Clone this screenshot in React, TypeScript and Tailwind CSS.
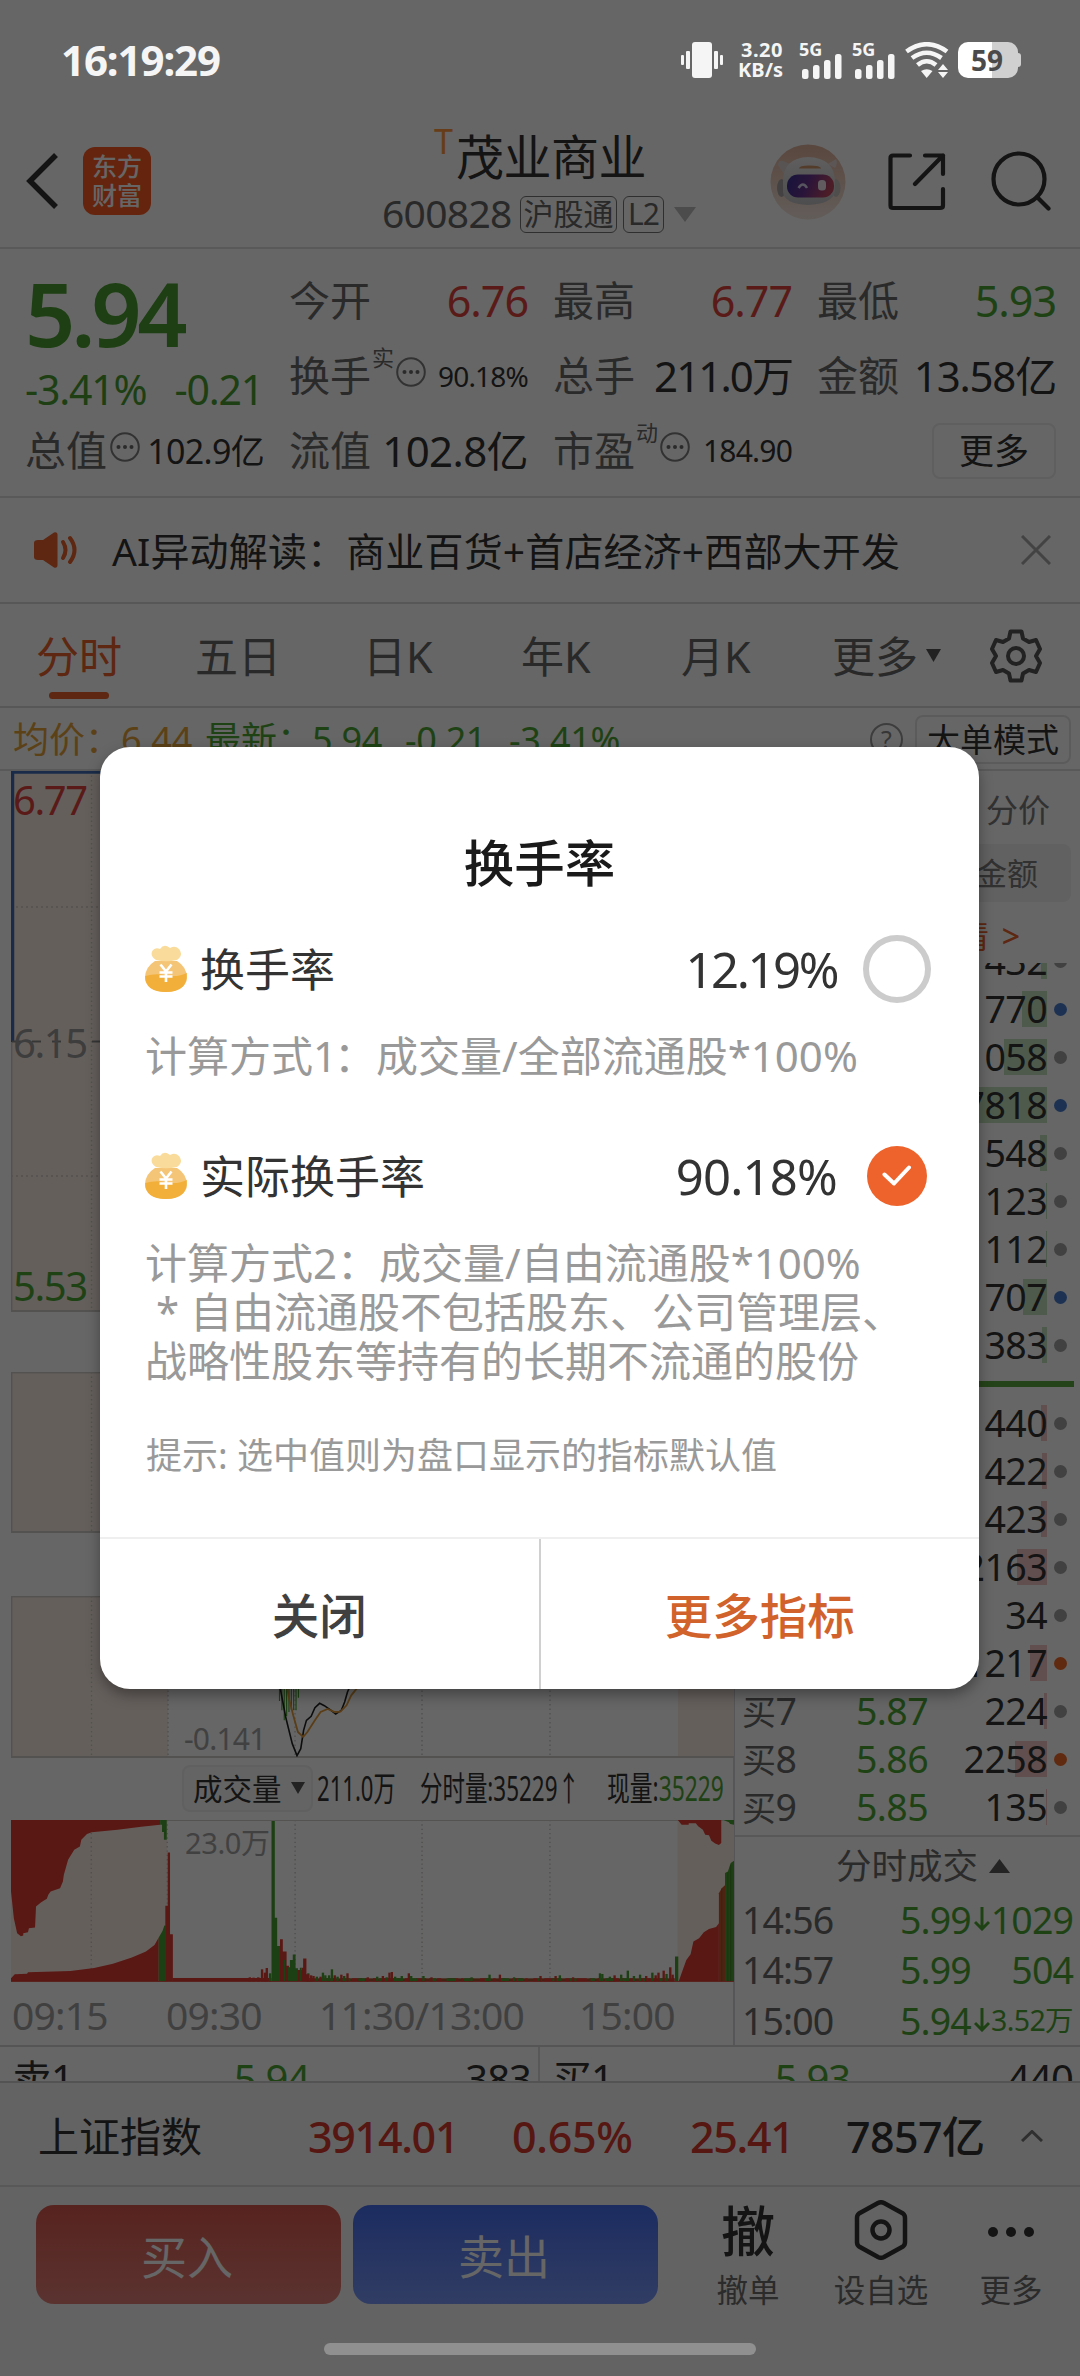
import React from "react";

const FONT = "font-['Noto_Sans','Noto_Sans_CJK_SC',sans-serif]";

/* ---------- icons ---------- */

function SignalBars() {
  return (
    <svg width="40" height="26" viewBox="0 0 40 26" fill="#f5f5f5">
      <rect x="0" y="16" width="6.5" height="10" rx="2.5" />
      <rect x="11" y="12" width="6.5" height="14" rx="2.5" />
      <rect x="22" y="7" width="6.5" height="19" rx="2.5" />
      <rect x="33" y="1" width="6.5" height="25" rx="2.5" />
    </svg>
  );
}

function VibrateIcon() {
  return (
    <svg width="42" height="36" viewBox="0 0 42 36" fill="#f5f5f5">
      <rect x="11" y="0" width="20" height="36" rx="3" />
      <rect x="5" y="9" width="4" height="18" rx="1" />
      <rect x="33" y="9" width="4" height="18" rx="1" />
      <rect x="0" y="13" width="3" height="10" rx="1" />
      <rect x="39" y="13" width="3" height="10" rx="1" />
    </svg>
  );
}

function WifiIcon() {
  return (
    <svg width="44" height="36" viewBox="0 0 44 36" fill="none" stroke="#f5f5f5" strokeWidth="4.6">
      <path d="M1.5 9.5 Q21.7 -5 42 9.5" />
      <path d="M7 16 Q21.7 5.5 36.5 16" />
      <path d="M12.5 23 Q21.7 15.5 31 23" />
      <path d="M16 29 Q21.7 25.5 27.5 29 L21.7 36Z" fill="#f5f5f5" stroke="none" />
      <path d="M33 28 L38 22 L43 28Z M33 30 L38 36 L43 30Z" fill="#f5f5f5" stroke="none" />
    </svg>
  );
}

function Robot() {
  return (
    <svg width="76" height="76" viewBox="0 0 76 76">
      <defs>
        <linearGradient id="halo" x1="0" y1="0" x2="0" y2="1">
          <stop offset="0" stopColor="#dfb29c" />
          <stop offset="1" stopColor="#f7e8e0" />
        </linearGradient>
        <linearGradient id="visor" x1="0" y1="0" x2="1" y2="0.2">
          <stop offset="0" stopColor="#3a3196" />
          <stop offset="0.5" stopColor="#6a348f" />
          <stop offset="1" stopColor="#c04a62" />
        </linearGradient>
        <linearGradient id="shell" x1="0" y1="0" x2="0" y2="1">
          <stop offset="0" stopColor="#f0ecec" />
          <stop offset="1" stopColor="#c0c0c4" />
        </linearGradient>
      </defs>
      <circle cx="38" cy="38" r="37.5" fill="url(#halo)" />
      <path d="M8 21 Q8 16 13 17 L20 20 L14 30Z" fill="#dcd2d0" />
      <path d="M66 15 Q68 19 65 24 L58 20Z" fill="#e6dad6" />
      <ellipse cx="11.5" cy="44" rx="4.5" ry="9" fill="#a8a4a4" />
      <ellipse cx="66" cy="44" rx="4.5" ry="9" fill="#c8c0c0" />
      <path d="M13 38 Q13 14 38 13 Q65 14 65 38 L65 48 Q62 60 38 61 Q14 60 13 48Z" fill="url(#shell)" />
      <path d="M29 24.5 Q29 21.5 39 21.5 Q51 21.5 51 24.5Z" fill="#d0966a" />
      <rect x="17" y="30.5" width="47" height="23" rx="11" fill="url(#visor)" />
      <path d="M28.5 44 Q33 37 37 44" stroke="#d8d4f0" strokeWidth="2.5" fill="none" />
      <rect x="48" y="36" width="8" height="10.5" rx="3.5" fill="#efe6f0" />
    </svg>
  );
}

function MoneyBag() {
  return (
    <svg width="44" height="48" viewBox="0 0 44 48">
      <path d="M11 16 L33 16 Q43 22 43 33 A21 14 0 0 1 1 33 Q1 22 11 16Z" fill="#f5c577" />
      <path d="M1.2 31 Q12 28 22 30.5 Q34 32.5 42.8 28 Q44 47 22 47 Q1 47 1.2 31Z" fill="#f2b03a" />
      <path d="M12 15 Q5 10 9 5 Q12 2 16 4 Q20 -2 26 3 Q31 0 35 4 Q40 10 33 15 Q22 17.5 12 15Z" fill="#f9dc9c" />
      <path d="M16.5 19.5 L22 26.5 L27.5 19.5 M15.5 27.5 H28.5 M15.5 31.5 H28.5 M22 26.5 V37" stroke="#fff" strokeWidth="2.6" fill="none" />
    </svg>
  );
}

function Ellip() {
  return (
    <svg width="30" height="30" viewBox="0 0 30 30" fill="none" stroke="#7d7d7d" strokeWidth="2" className="shrink-0">
      <circle cx="15" cy="15" r="13.8" />
      <g fill="#6a6a6a" stroke="none">
        <circle cx="8.5" cy="15" r="2" />
        <circle cx="15" cy="15" r="2" />
        <circle cx="21.5" cy="15" r="2" />
      </g>
    </svg>
  );
}

/* ---------- status bar and header ---------- */

function StatusBar() {
  return (
    <div className="relative z-20 flex h-[120px] items-center justify-between pr-[59px] pl-[61px] text-[#f5f5f5]">
      <span className="text-[42px] leading-none font-bold tracking-[-1.1px]">16:19:29</span>
      <div className="flex h-[36px] items-center">
        <VibrateIcon />
        <div className="ml-[14px] flex w-[46px] flex-col items-end text-[20px] leading-[20px] font-bold">
          <span className="tracking-[0.5px]">3.20</span>
          <span>KB/s</span>
        </div>
        {[0, 1].map((i) => (
          <div key={i} className={i === 0 ? "ml-[16px] flex h-[36px] w-[44px] flex-col" : "ml-[9px] flex h-[36px] w-[44px] flex-col"}>
            <span className="h-[11px] text-[18px] leading-[15px] font-bold">5G</span>
            <span className="pl-[3px]"><SignalBars /></span>
          </div>
        ))}
        <span className="ml-[9px]"><WifiIcon /></span>
        <div className="ml-[9px] flex h-[36px] w-[60px] items-center justify-center rounded-[10px] bg-[linear-gradient(90deg,#fff_57%,#d0d0d0_57%)] pr-[2px] text-[28px] leading-none font-bold text-[#4a4a4a]">
          59
        </div>
        <div className="h-[14px] w-[3px] rounded-r-full bg-[#d0d0d0]" />
      </div>
    </div>
  );
}

function Header() {
  return (
    <header className="flex h-[129px] items-start border-b-2 border-[#e0dfe0] pl-[26px] text-[#333]">
      <svg width="34" height="56" viewBox="0 0 34 56" className="mt-[33px]" fill="none" stroke="#333" strokeWidth="5.5">
        <path d="M30 2 L4 28 L30 54" />
      </svg>
      <div className="mt-[27px] ml-[23px] flex h-[68px] w-[68px] flex-col items-center justify-center rounded-[12px] bg-[#fd5a23] text-[25px] leading-[29px] font-medium text-white">
        <span>东方</span>
        <span>财富</span>
      </div>
      <div className="ml-[231px] flex w-[315px] flex-col">
        <div className="flex h-[66px] items-center pl-[52px]">
          <span className="mb-[24px] text-[34px] leading-none text-[#ff9a3c]">T</span>
          <span className="mt-[8px] ml-[3px] text-[48px] leading-none tracking-[-0.5px]">茂业商业</span>
        </div>
        <div className="mt-[9px] flex h-[38px] items-center text-[#666]">
          <span className="w-[138px] pb-[4px] text-[39px] leading-none tracking-[-0.7px]">600828</span>
          <span className="flex h-[37px] w-[97px] items-center justify-center rounded-[6px] border-[1.5px] border-[#777] text-[30px] leading-none">沪股通</span>
          <span className="ml-[6px] flex h-[37px] w-[41px] items-center justify-center rounded-[6px] border-[1.5px] border-[#777] text-[30px] leading-none tracking-[-1px]">L2</span>
          <svg width="22" height="15" viewBox="0 0 22 15" className="ml-[10px]" fill="#bdbdbd"><path d="M0 0 H22 L11 15Z" /></svg>
        </div>
      </div>
      <div className="mt-[24px] ml-[73px] w-[76px] shrink-0"><Robot /></div>
      <svg width="58" height="58" viewBox="0 0 58 58" className="mt-[33px] ml-[42px] shrink-0" fill="none" stroke="#333" strokeWidth="4.2" strokeLinecap="round" strokeLinejoin="round">
        <path d="M22 2.5 H5 Q2.5 2.5 2.5 5 V52.5 Q2.5 55 5 55 H52 Q55 55 55 52.5 V36" />
        <path d="M37 2.5 H55 V21 M55 2.5 L27 31" />
      </svg>
      <svg width="60" height="60" viewBox="0 0 60 60" className="mt-[31px] ml-[45px] shrink-0" fill="none" stroke="#333" strokeWidth="4.2" strokeLinecap="round">
        <circle cx="28" cy="28" r="25.5" />
        <path d="M46 46 L57.5 57.5" />
      </svg>
    </header>
  );
}

/* ---------- quote ---------- */

function Cell({ label, sup, info, value, valueClass }: { label: string; sup?: string; info?: boolean; value: string; valueClass: string }) {
  return (
    <div className="flex h-[75px] items-center">
      <span className="text-[41px] leading-none text-[#696969]">{label}</span>
      {sup && <span className="mb-[38px] ml-[1px] text-[22px] leading-none text-[#696969]">{sup}</span>}
      {info && <span className={sup ? "mt-[-8px] ml-[2px]" : "mt-[-8px] ml-[3px]"}><Ellip /></span>}
      <span className={"ml-auto leading-none whitespace-nowrap " + valueClass}>{value}</span>
    </div>
  );
}

function Quote() {
  const big = "text-[43px] tracking-[-1px] ";
  return (
    <section className="h-[249px] border-b-2 border-[#e0dfe0] pt-[14px] pl-[25px]">
      <div className="grid grid-cols-[239px_239px_239px_239px] gap-x-[25px]">
        <div className="row-span-2 flex flex-col text-[#4a9f30]">
          <span className="h-[102px] text-[88px] leading-[100px] font-semibold tracking-[-4.2px]">5.94</span>
          <div className="flex h-[48px] items-center justify-between pr-[1px] text-[41px] leading-none tracking-[-1.2px]">
            <span>-3.41%</span>
            <span>-0.21</span>
          </div>
        </div>
        <Cell label="今开" value="6.76" valueClass={big + "text-[#e0453c]"} />
        <Cell label="最高" value="6.77" valueClass={big + "text-[#e0453c]"} />
        <Cell label="最低" value="5.93" valueClass={big + "text-[#4fa535]"} />
        <Cell label="换手" sup="实" info value="90.18%" valueClass="text-[28px] tracking-[-0.8px]" />
        <Cell label="总手" value="211.0万" valueClass="text-[42px] tracking-[-1.9px]" />
        <Cell label="金额" value="13.58亿" valueClass="text-[42px] tracking-[-1.2px]" />
        <Cell label="总值" info value="102.9亿" valueClass="text-[34px] tracking-[-0.7px]" />
        <Cell label="流值" value="102.8亿" valueClass="text-[42px] tracking-[-0.6px]" />
        <Cell label="市盈" sup="动" info value="184.90" valueClass="text-[30px] tracking-[-0.8px]" />
        <div className="flex h-[75px] items-center justify-end">
          <button className="h-[56px] w-[124px] rounded-[8px] border-2 border-[#ededed] text-[35px] leading-none">更多</button>
        </div>
      </div>
    </section>
  );
}

function News() {
  return (
    <section className="flex h-[106px] items-center border-b-2 border-[#d9d9d9] pr-[29px] pl-[34px]">
      <svg width="44" height="36" viewBox="0 0 44 36" fill="#e8622c">
        <path d="M0 11 Q0 8 4 8 H9 L20 0.5 Q23.5 -0.5 23.5 3 V33 Q23.5 36.5 20 35.5 L9 28 H4 Q0 28 0 25Z" />
        <path d="M29 10 Q34 18 29 26" fill="none" stroke="#e8622c" strokeWidth="4" strokeLinecap="round" />
        <path d="M36 6 Q45 18 36 30" fill="none" stroke="#e8622c" strokeWidth="4" strokeLinecap="round" />
      </svg>
      <span className="ml-[34px] text-[39px] leading-none tracking-[0.15px]">AI异动解读：商业百货+首店经济+西部大开发</span>
      <svg width="30" height="30" viewBox="0 0 30 30" className="ml-auto" stroke="#a8a8a8" strokeWidth="3"><path d="M1 1 L29 29 M29 1 L1 29" /></svg>
    </section>
  );
}

function Tabs() {
  const tabs: [string, string][] = [
    ["五日", "ml-[72px] w-[86px]"],
    ["日K", "ml-[82px] w-[74px]"],
    ["年K", "ml-[84px] w-[74px]"],
    ["月K", "ml-[86px] w-[74px]"],
    ["更多", "ml-[77px] w-[88px]"],
  ];
  return (
    <nav className="flex h-[104px] items-start border-b-2 border-[#d9d9d9] pl-[35px] text-[43px] text-[#666]">
      <div className="flex w-[88px] flex-col items-center">
        <span className="mt-[31px] h-[44px] leading-[44px] text-[#e8622c]">分时</span>
        <span className="mt-[13px] h-[7px] w-[60px] rounded-full bg-[#e8622c]" />
      </div>
      {tabs.map(([t, c]) => (
        <span key={t} className={"mt-[31px] leading-[44px] whitespace-nowrap " + c}>{t}</span>
      ))}
      <svg width="15" height="13" viewBox="0 0 15 13" className="mt-[45px] ml-[6px]" fill="#555"><path d="M0 0 H15 L7.5 13Z" /></svg>
      <svg width="52" height="54" viewBox="0 0 52 54" className="mt-[25px] ml-[49px]" fill="none" stroke="#555" strokeWidth="4" strokeLinejoin="round">
        <path d="M20.5 2.5 H31.5 L33 9.5 L39 13 L46 11 L50 20 L46 27 L50 34 L46 43 L39 41 L33 44.5 L31.5 51.5 H20.5 L19 44.5 L13 41 L6 43 L2 34 L6 27 L2 20 L6 11 L13 13 L19 9.5Z" />
        <circle cx="26" cy="27" r="8" />
      </svg>
    </nav>
  );
}

function PriceInfo() {
  return (
    <div className="flex h-[63px] items-center border-b-2 border-[#dedede] pt-[2px] pr-[9px] pl-[13px] text-[36px] leading-none whitespace-nowrap text-[#4fa535]">
      <span className="w-[108px] text-[#e5a23a]">均价：</span>
      <span className="w-[84px] text-[#e5a23a]">6.44</span>
      <span className="w-[107px]">最新：</span>
      <span className="w-[93px] tracking-[-0.4px]">5.94</span>
      <span className="w-[104px] tracking-[-0.4px]">-0.21</span>
      <span className="tracking-[-0.3px]">-3.41%</span>
      <div className="ml-auto flex h-[33px] w-[33px] items-center justify-center rounded-full border-2 border-[#999] text-[25px] text-[#888]">?</div>
      <div className="ml-[12px] flex h-[49px] w-[156px] items-center justify-center rounded-[8px] border-2 border-[#e4e4e4] text-[33px] text-[#333]">大单模式</div>
    </div>
  );
}

/* ---------- charts ---------- */

function Frame({ height, className = "", rows = false, children }: { height: number; className?: string; rows?: boolean; children?: React.ReactNode }) {
  return (
    <div className={"relative ml-[11px] w-[723px] " + className}>
      <svg width="723" height={height} viewBox={`0 0 723 ${height}`} className="absolute inset-0">
        <rect x="0" y="0" width="157" height={height} fill="#fceee5" />
        <rect x="667" y="0" width="56" height={height} fill="#fceee5" />
        <g stroke="#cfcac6" strokeWidth="1.5" strokeDasharray="1.5 3">
          {[80.5, 157, 284, 411, 539].map((x) => (
            <path key={x} d={`M${x} 0 V${height}`} />
          ))}
        </g>
        {rows && (
          <g stroke="#cfcac6" strokeWidth="1.5" strokeDasharray="2 3">
            <path d="M0 136 H723 M0 405 H723" />
          </g>
        )}
        <path d={`M0 0.5 H723 M0.5 0 V${height} M0 ${height - 1} H723`} stroke="#d3cdc9" strokeWidth="2" fill="none" />
      </svg>
      {children}
    </div>
  );
}

/* Minor volume spikes: x, height, rising flag */
const spikes: [number, number, number][] = [
  [530, 12, 1], [538, 11, 1], [548, 12, 1], [556, 36, 1], [562, 26, 1], [566, 40, 1], [573, 24, 0],
  [654, 24, 0], [660, 18, 1], [665, 16, 1], [672, 14, 0], [680, 14, 1], [685, 26, 0], [690, 18, 0], [698, 18, 0], [704, 36, 0], [710, 18, 1], [716, 14, 0], [724, 20, 1], [730, 16, 0], [737, 24, 1],
  [780, 12, 1], [800, 14, 0], [812, 16, 1], [820, 12, 0], [826, 26, 1], [831, 28, 1], [838, 14, 0], [852, 16, 0], [867, 24, 1], [872, 16, 0], [898, 16, 0], [915, 12, 1],
  [1000, 12, 0], [1038, 20, 0], [1060, 20, 1], [1090, 12, 0], [1146, 16, 1], [1178, 16, 1], [1187, 18, 0], [1215, 12, 1],
  [1272, 24, 0], [1277, 22, 0], [1293, 14, 0], [1303, 18, 1], [1317, 20, 0], [1331, 32, 0], [1344, 16, 0], [1357, 20, 0], [1370, 16, 1], [1383, 26, 0], [1390, 18, 1], [1396, 26, 1], [1407, 32, 1], [1413, 22, 0], [1421, 42, 1], [1426, 20, 1],
];

function VolumeChart() {
  const RED = "#e03c32";
  const GREEN = "#48a030";
  return (
    <div className="relative mt-[7px] ml-[11px] h-[162px] w-[723px] pt-[7px] pl-[174px]">
      <svg width="723" height="162" viewBox="24 426 1532 485" preserveAspectRatio="none" className="absolute inset-0">
        <rect x="24" y="426" width="331" height="485" fill="#fceee5" />
        <rect x="1436" y="426" width="120" height="485" fill="#fceee5" />
        <g stroke="#c8c4c0" strokeWidth="3" strokeDasharray="4 9">
          <path d="M194 426 V909 M355 426 V909 M626 426 V909 M895 426 V909 M1166 426 V909" />
        </g>
        <path d="M24 427 H1556" stroke="#d3d0ce" strokeWidth="4" />
        <path fill={RED} d="M24 426 V640 L30 720 L37 765 L45 774 L50 772 L50 765 L60 762 L62 750 L75 748 L77 685 L88 672 L100 662 L103 650 L108 640 L128 630 L134 610 L136 590 L145 545 L158 515 L170 505 L173 485 L185 468 L195 463 L250 455 L300 446 L340 440 V426Z" />
        <path fill={GREEN} d="M340 426 H354 V485 H348 V462 H344 V440 H340Z" />
        <path fill={RED} d="M24 909 V900 L32 888 L58 886 L60 882 L150 878 L200 869 L240 856 L280 838 L310 820 L328 800 L337 778 V909Z" />
        <path fill={GREEN} d="M337 909 V778 L345 758 L349 742 H352 V909Z" />
        <path fill={RED} d="M351 909 V683 H356 V523 H361 V768 H367 V909Z" />
        <rect x="366" y="899" width="210" height="10" fill={RED} />
        <rect x="640" y="900" width="790" height="9" fill="#a8552f" />
        <path d="M655 904.5 H1430" stroke={RED} strokeWidth="9" strokeDasharray="9 14 22 6 5 12" />
        <path d="M648 904.5 H1430" stroke={GREEN} strokeWidth="9" strokeDasharray="14 30 9 22 20 17" />
        {spikes.map(([x, h, up], i) => (
          <rect key={i} x={x - 2.5} y={909 - h} width="5" height={h} fill={up ? RED : GREEN} />
        ))}
        <path fill={GREEN} d="M576 909 V429 H583 V719 H588 V803 H594 V909Z" />
        <path fill={RED} d="M594 909 V783 H600 V820 H608 V862 H613 V909Z" />
        <path fill={GREEN} d="M602 909 V845 H605 V909Z M611 909 V867 H615 V845 H621 V829 H627 V870 H632 V909Z" />
        <path fill={RED} d="M631 909 V875 H640 V868 H643 V841 H650 V888 H656 V909Z" />
        <path fill={GREEN} d="M1431 909 V835 H1438 V909Z M636 909 V868 H640 V909Z" />
        <path fill={RED} d="M1439 909 L1446 880 L1455 845 L1464 828 L1470 790 L1482 780 L1492 762 L1503 752 L1518 746 L1524 735 V909Z" />
        <path fill="#c8552f" d="M1524 909 V645 L1530 630 L1538 620 V909Z" />
        <path fill={GREEN} d="M1537 909 V585 L1543 580 L1549 555 L1556 548 V909Z" />
        <path d="M1530 632 V909 M1543 583 V909 M1549 560 V909" stroke="#3b6f2a" strokeWidth="1.5" />
        <path fill={RED} d="M1437 426 L1445 440 H1460 V436 H1475 L1480 445 L1490 455 L1495 470 L1503 472 L1508 488 L1516 496 L1524 501 L1529 495 V426Z" />
        <path fill={GREEN} d="M1534 426 H1556 V440 L1548 438 L1545 433Z" />
        <path d="M24 909.5 H1556" stroke={RED} strokeWidth="2" />
      </svg>
      <span className="relative block text-[29px] leading-[32px] tracking-[-0.4px] text-[#a3a3a3]">23.0万</span>
    </div>
  );
}

function LeftColumn() {
  return (
    <div className="flex w-[735px] shrink-0 flex-col border-r-2 border-[#d8d8dc] text-[40px] leading-none">
      <Frame height={541} rows className="flex h-[541px] flex-col justify-between pt-[9px] pb-[4px]">
        <svg width="200" height="274" viewBox="0 0 200 274" className="absolute inset-0" fill="none">
          <path d="M0 1 H200 M1.5 0 V271" stroke="#3f6cb5" strokeWidth="3.5" />
          <path d="M1 270.5 H200" stroke="#888" strokeWidth="2" strokeDasharray="9 11" />
        </svg>
        <span className="relative pl-[2px] tracking-[-1.4px] text-[#e0453c]">6.77</span>
        <span className="relative pl-[2px] tracking-[-1.4px] text-[#999]">6.15</span>
        <span className="relative pl-[2px] tracking-[-1.4px] text-[#4fa535]">5.53</span>
      </Frame>
      <Frame height={161} className="mt-[62px] h-[161px]" />
      <Frame height={162} className="mt-[63px] flex h-[162px] items-end pl-[173px]">
        <svg width="723" height="80" viewBox="24 0 1532 240" preserveAspectRatio="none" className="absolute bottom-0 left-0" fill="none">
          <path d="M593 0 V72 M598 0 V100 M603 0 V130 M608 0 V118 M613 0 V105 M618 0 V98 M623 0 V100 M628 0 V100 M633 0 V62" stroke="#48a030" strokeWidth="2.5" />
          <path d="M590 0 L606 120 L620 200 L630 236 L638 215 L644 160 L650 130 L660 118 L668 92 L678 79 L688 86 L700 98 L712 111 L724 100 L731 75 L737 45 L745 20" stroke="#222" strokeWidth="1.6" vectorEffect="non-scaling-stroke" />
          <path d="M605 0 L614 70 L622 115 L632 165 L643 180 L652 165 L668 130 L680 105 L695 96 L710 105 L722 104 L735 85 L745 55 L765 20" stroke="#e09a38" strokeWidth="1.8" vectorEffect="non-scaling-stroke" />
        </svg>
        <span className="relative text-[30px] leading-[37px] tracking-[-0.8px] text-[#a3a3a3]">-0.141</span>
      </Frame>
      <div className="mt-[7px] flex h-[49px] items-center pl-[182px] text-[#333]">
        <div className="flex h-[47px] w-[131px] shrink-0 items-center rounded-[8px] border-2 border-[#efefef] bg-[#f9f9f9] pl-[9px] text-[29.5px] leading-none">
          成交量
          <svg width="14" height="12" viewBox="0 0 14 12" className="ml-[9px]" fill="#555"><path d="M0 0 H14 L7 12Z" /></svg>
        </div>
        <span className="ml-[4px] w-[103px] origin-left scale-x-[0.65] text-[34px] leading-none whitespace-nowrap">211.0万</span>
        <span className="w-[187px] origin-left scale-x-[0.66] text-[34px] leading-none whitespace-nowrap">分时量:35229↑</span>
        <span className="w-[120px] origin-left scale-x-[0.67] text-[34px] leading-none whitespace-nowrap">
          现量:<span className="text-[#4fa535]">35229</span>
        </span>
      </div>
      <VolumeChart />
      <div className="flex h-[64px] items-center pt-[2px] pl-[12px] text-[39px] leading-none tracking-[-0.8px] whitespace-nowrap text-[#a0a0a0]">
        <span className="w-[154px]">09:15</span>
        <span className="w-[153px]">09:30</span>
        <span className="w-[260px]">11:30/13:00</span>
        <span>15:00</span>
      </div>
    </div>
  );
}

/* ---------- order book ---------- */

const dotColor = { g: "bg-[#a2a2a4]", b: "bg-[#4a7cd0]", o: "bg-[#f0692a]" };
type Row = { v: string; w: number; d: "g" | "b" | "o"; label?: string; price?: string };

const sells: Row[] = [
  { v: "432", w: 6, d: "g" },
  { v: "770", w: 25, d: "b" },
  { v: "1058", w: 43, d: "g" },
  { v: "7818", w: 240, d: "b" },
  { v: "548", w: 7, d: "g" },
  { v: "123", w: 1, d: "g" },
  { v: "112", w: 1, d: "g" },
  { v: "707", w: 24, d: "b" },
  { v: "383", w: 5, d: "g" },
];
const buys: Row[] = [
  { v: "440", w: 6, d: "g" },
  { v: "422", w: 5, d: "g" },
  { v: "423", w: 6, d: "g" },
  { v: "2163", w: 30, d: "g" },
  { v: "34", w: 0, d: "g" },
  { v: "1217", w: 17, d: "o" },
  { v: "224", w: 3, d: "g", label: "买7", price: "5.87" },
  { v: "2258", w: 32, d: "o", label: "买8", price: "5.86" },
  { v: "135", w: 1, d: "g", label: "买9", price: "5.85" },
];

function BookRow({ row, side }: { row: Row; side: "sell" | "buy" }) {
  return (
    <div className="flex h-[48px] shrink-0 items-center text-[37.5px] leading-none tracking-[-0.6px]">
      <span className="w-[121px] pl-[7px] text-[#696969]">
        {row.label && <><span className="text-[34px]">{row.label[0]}</span>{row.label[1]}</>}
      </span>
      <span className="w-[82px] text-[#4fa535]">{row.price}</span>
      <div className="relative flex h-[36px] flex-1 items-center justify-end">
        <div className={side === "sell" ? "absolute right-0 h-full bg-[#c4e0bf]" : "absolute right-0 h-full bg-[#f2c4c4]"} style={{ width: row.w }} />
        <span className="relative text-[#333]">{row.v}</span>
      </div>
      <span className={"mr-[13px] ml-[7px] h-[13px] w-[13px] rounded-full " + dotColor[row.d]} />
    </div>
  );
}

function Tick({ time, price, arrow, vol, small }: { time: string; price: string; arrow?: boolean; vol: string; small?: boolean }) {
  return (
    <div className="flex h-[50.5px] shrink-0 items-center pr-[7px] pl-[7px] text-[37.5px] leading-none tracking-[-0.9px] whitespace-nowrap text-[#4fa535]">
      <span className="w-[158px] shrink-0 text-[#696969]">{time}</span>
      <span className="w-[74px] shrink-0">{price}</span>
      {arrow && (
        <svg width="16" height="24" viewBox="0 0 16 24" className="shrink-0" fill="none" stroke="#4fa535" strokeWidth="3"><path d="M8 0 V22 M1 15 L8 22 L15 15" /></svg>
      )}
      <span className={small ? "ml-auto text-[28.5px] tracking-[-0.6px]" : "ml-auto"}>{vol}</span>
    </div>
  );
}

function RightColumn() {
  return (
    <div className="flex flex-1 flex-col">
      <div className="flex h-[73px] shrink-0 items-center justify-end pt-[4px] pr-[30px] text-[32px] leading-none text-[#7a7a7a]">分价</div>
      <div className="mr-[9px] ml-[9px] flex h-[58px] shrink-0 items-center justify-end rounded-[8px] bg-[#f3f3f3] pr-[33px] text-[31px] leading-none text-[#7a7a7a]">金额</div>
      <div className="flex h-[61px] shrink-0 items-center justify-end pt-[7px] pr-[60px] text-[32px] leading-none text-[#e8622c]">
        <span>详情</span>
        <span className="ml-[13px] font-medium">&gt;</span>
      </div>
      <div className="h-[406px] shrink-0 overflow-hidden">
        <div className="mt-[-26px]">
          {sells.map((r) => <BookRow key={r.v} row={r} side="sell" />)}
        </div>
      </div>
      <div className="mt-[12px] mr-[6px] mb-[12px] h-[6px] shrink-0 bg-[#5aa83c]" />
      {buys.map((r) => <BookRow key={r.v} row={r} side="buy" />)}
      <div className="mt-[4px] shrink-0 border-t-2 border-[#dcdcdc]" />
      <div className="flex h-[57px] shrink-0 items-center justify-center pl-[31px] text-[35.5px] leading-none text-[#6c6c6c]">
        分时成交
        <svg width="21" height="14" viewBox="0 0 21 14" className="ml-[11px]" fill="#5a5a5a"><path d="M10.5 0 L21 14 H0Z" /></svg>
      </div>
      <Tick time="14:56" price="5.99" arrow vol="1029" />
      <Tick time="14:57" price="5.99" vol="504" />
      <Tick time="15:00" price="5.94" arrow vol="3.52万" small />
    </div>
  );
}

/* ---------- bottom ---------- */

function Level({ name, price, vol, className = "" }: { name: string; price: string; vol: string; className?: string }) {
  return (
    <div className={"grid grid-cols-[1fr_auto_1fr] pt-[12px] text-[40px] leading-[40px] tracking-[-1px] " + className}>
      <span>{name}</span>
      <span className="text-[#4fa535]">{price}</span>
      <span className="text-right">{vol}</span>
    </div>
  );
}

function BottomBar() {
  return (
    <>
      <div className="flex h-[106px] items-center border-y-2 border-t-[#d0d0d0] border-b-[#dcdcdc] bg-[#f7f7f7] pt-[4px] pl-[38px] text-[43px] leading-none tracking-[-1.3px] whitespace-nowrap">
        <span className="w-[270px] text-[41px] tracking-normal">上证指数</span>
        <span className="w-[204px] font-medium text-[#d8382e]">3914.01</span>
        <span className="w-[178px] font-medium tracking-[-0.3px] text-[#d8382e]">0.65%</span>
        <span className="w-[156px] font-medium text-[#d8382e]">25.41</span>
        <span className="w-[175px] font-medium tracking-[-0.6px]">7857亿</span>
        <svg width="22" height="12" viewBox="0 0 22 12" fill="none" stroke="#777" strokeWidth="3"><path d="M1 11 L11 1.5 L21 11" /></svg>
      </div>
      <div className="flex h-[189px] items-start bg-[#f7f7f7] pt-[18px] pl-[36px]">
        <button className="h-[99px] w-[305px] rounded-[18px] bg-linear-to-b from-[#da574e] to-[#e28078] pt-[3px] pr-[3px] text-[46px] leading-none text-white">买入</button>
        <button className="ml-[12px] h-[99px] w-[305px] rounded-[18px] bg-linear-to-b from-[#466ef0] to-[#7a98f8] pt-[3px] pr-[3px] text-[46px] leading-none text-white">卖出</button>
        <div className="ml-[50px] flex w-[80px] flex-col items-center">
          <span className="h-[60px] text-[54px] leading-[52px] font-medium">撤</span>
          <span className="mt-[9px] text-[31.5px] leading-[32px] text-[#6c6c6c]">撤单</span>
        </div>
        <div className="ml-[44px] flex w-[98px] flex-col items-center">
          <svg width="54" height="60" viewBox="0 0 54 60" className="mt-[-5px]" fill="none" stroke="#333" strokeWidth="4.5" strokeLinejoin="round">
            <path d="M24 3 Q27 1.5 30 3 L49 13.5 Q51 15 51 18 V42 Q51 45 49 46.5 L30 57 Q27 58.5 24 57 L5 46.5 Q3 45 3 42 V18 Q3 15 5 13.5Z" />
            <circle cx="27" cy="30" r="8.5" />
          </svg>
          <span className="mt-[14px] text-[31.5px] leading-[32px] text-[#6c6c6c]">设自选</span>
        </div>
        <div className="ml-[41px] flex w-[80px] flex-col items-center">
          <svg width="48" height="60" viewBox="0 0 48 60" fill="#333">
            <circle cx="6" cy="27" r="5" /><circle cx="24" cy="27" r="5" /><circle cx="42" cy="27" r="5" />
          </svg>
          <span className="mt-[9px] text-[31.5px] leading-[32px] text-[#6c6c6c]">更多</span>
        </div>
      </div>
    </>
  );
}

/* ---------- dialog ---------- */

function Option({ label, value, checked }: { label: string; value: string; checked?: boolean }) {
  return (
    <div className="flex h-[68px] items-center pr-[48px] pl-[44px] text-[#333]">
      <MoneyBag />
      <span className="ml-[12px] pt-[1px] text-[45px] leading-none">{label}</span>
      <span className={"ml-auto pt-[1px] text-[49px] leading-none " + (checked ? "tracking-[-0.8px]" : "tracking-[-2.4px]")}>{value}</span>
      <div className="ml-[26px] flex w-[68px] justify-center">
        {checked ? (
          <div className="flex h-[60px] w-[60px] items-center justify-center rounded-full bg-[#ed632b]">
            <svg width="30" height="22" viewBox="0 0 30 22" fill="none" stroke="#fff" strokeWidth="4" strokeLinecap="round" strokeLinejoin="round"><path d="M2.5 9.5 L12 18.5 L27 2.5" /></svg>
          </div>
        ) : (
          <div className="h-[68px] w-[68px] rounded-full border-[6px] border-[#ccc]" />
        )}
      </div>
    </div>
  );
}

function Dialog() {
  return (
    <div className="absolute top-[747px] left-[100px] flex h-[942px] w-[879px] flex-col rounded-[30px] bg-white shadow-[0_6px_14px_rgba(0,0,0,0.35)]">
      <h2 className="mt-[89px] mb-[46px] text-center text-[50.5px] leading-[53px] font-medium text-[#1a1a1a]">换手率</h2>
      <Option label="换手率" value="12.19%" />
      <p className="mt-[28px] pl-[45px] text-[42px] leading-[49px] whitespace-nowrap text-[#999]">计算方式<span className="tracking-[-3px]">1</span>：成交量/全部流通股*100%</p>
      <div className="mt-[62px]"><Option label="实际换手率" value="90.18%" checked /></div>
      <p className="mt-[28px] pl-[45px] text-[42px] leading-[49px] whitespace-pre text-[#999]">
        {"计算方式2：成交量/自由流通股*100%\n * 自由流通股不包括股东、公司管理层、\n战略性股东等持有的长期不流通的股份"}
      </p>
      <p className="mt-[51px] pl-[46px] text-[36px] leading-[40px] whitespace-nowrap text-[#999]">提示: 选中值则为盘口显示的指标默认值</p>
      <div className="mt-auto flex h-[152px] border-t-2 border-[#efefef] text-[47.5px] font-medium">
        <button className="flex-1 border-r-2 border-[#d0d0d0] pt-[3px] text-[#404040]">关闭</button>
        <button className="flex-1 pt-[3px] text-[#d2622c]">更多指标</button>
      </div>
    </div>
  );
}

export default function App() {
  return (
    <div className={"relative flex h-[2376px] w-[1080px] flex-col overflow-hidden bg-white text-[#333] " + FONT}>
      <StatusBar />
      <Header />
      <Quote />
      <News />
      <Tabs />
      <PriceInfo />
      <div className="flex h-[1276px] border-b-2 border-[#d4d4d8]">
        <LeftColumn />
        <RightColumn />
      </div>
      <div className="flex h-[34px] overflow-hidden">
        <Level name="卖1" price="5.94" vol="383" className="w-[540px] border-r-2 border-[#dcdcdc] pr-[7px] pl-[12px]" />
        <Level name="买1" price="5.93" vol="440" className="w-[540px] pr-[7px] pl-[12px]" />
      </div>
      <BottomBar />
      <div className="absolute inset-0 z-10 bg-black/60" />
      <div className="absolute bottom-[21px] left-[324px] z-20 h-[12px] w-[432px] rounded-full bg-[#909090]" />
      <div className="absolute inset-0 z-30"><Dialog /></div>
    </div>
  );
}
